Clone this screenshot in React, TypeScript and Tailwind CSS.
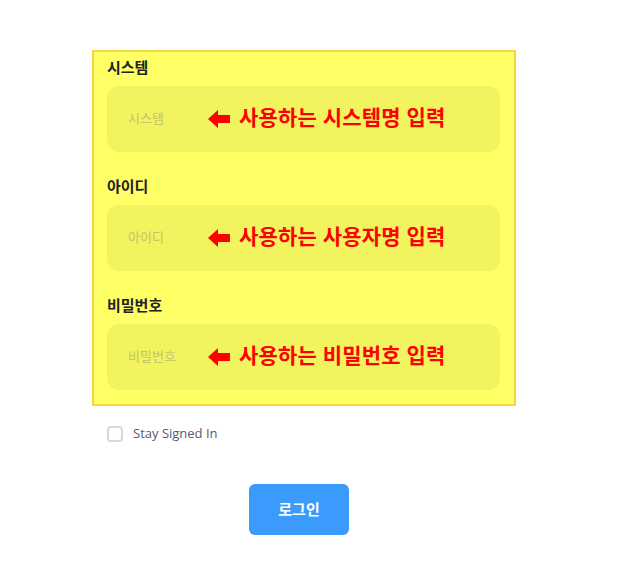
import React from "react";

const Arrow = () => (
  <svg width="22" height="18" viewBox="0 0 22 18" className="shrink-0">
    <path d="M0 9 L10 0 L10 5 L22 5 L22 13 L10 13 L10 18 Z" fill="#ff0000" />
  </svg>
);

const Field = ({ label, placeholder, note, first }: { label: string; placeholder: string; note: string; first?: boolean }) => (
  <div className={first ? "" : "mt-[24px]"}>
    <div className="h-[20px] leading-[20px] text-[15px] font-bold text-[#222]">{label}</div>
    <div className="mt-[9px] h-[66px] rounded-[12px] bg-[#f1f35f] flex items-center pl-[21px]">
      <span className="w-[80px] text-[13px] text-[#c4c46a]">{placeholder}</span>
      <Arrow />
      <span className="ml-[9px] mb-[3px] text-[21px] font-bold text-[#ff0000] tracking-[0.2px]">{note}</span>
    </div>
  </div>
);

export default function App() {
  return (
    <div
      className="w-[621px] h-[574px] bg-white"
      style={{ fontFamily: '"Noto Sans", "Noto Sans CJK KR", sans-serif' }}
    >
      <div className="pt-[50px] pl-[92px]">
        <div className="w-[424px] h-[356px] border-2 border-[#f7d53e] bg-[#ffff66] pt-[5px] pl-[13px] pr-[14px]">
          <Field first label="시스템" placeholder="시스템" note="사용하는 시스템명 입력" />
          <Field label="아이디" placeholder="아이디" note="사용하는 사용자명 입력" />
          <Field label="비밀번호" placeholder="비밀번호" note="사용하는 비밀번호 입력" />
        </div>
        <div className="mt-[18px] ml-[15px] flex items-center">
          <div className="w-[16px] h-[16px] rounded-[4px] border-2 border-[#d5d7e3] bg-white" />
          <span className="ml-[10px] text-[13px] text-[#555a6b]" style={{ fontFamily: '"Open Sans", sans-serif' }}>Stay Signed In</span>
        </div>
      </div>
      <div className="mt-[40px] flex pl-[249px]">
        <button className="w-[100px] h-[51px] rounded-[6px] bg-[#3a9bfc] text-white text-[15px] font-bold">로그인</button>
      </div>
    </div>
  );
}
